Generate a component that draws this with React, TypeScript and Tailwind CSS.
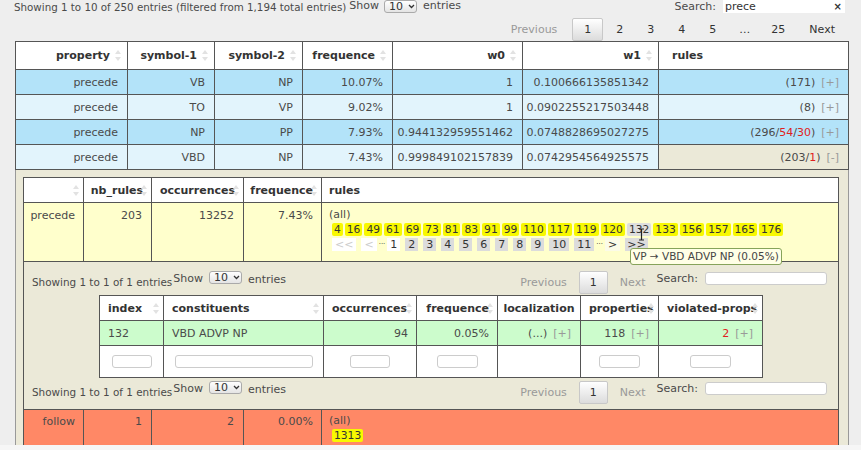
import React from "react";

const Sort = () => (
  <svg width="6" height="11" viewBox="0 0 6 11" className="shrink-0">
    <path d="M3 0 L6 4 H0 Z" fill="#e2e2e2" />
    <path d="M3 11 L6 7 H0 Z" fill="#e2e2e2" />
  </svg>
);

function Select() {
  return (
    <div className="flex items-center h-[13px] w-[33px] border border-[#aaa] rounded-[3px] bg-gradient-to-b from-white to-[#e4e4e4] pl-[4px] gap-[5px] text-[#333] leading-[11px]">
      <span>10</span>
      <svg width="7" height="5" viewBox="0 0 7 5">
        <path d="M1 1 L3.5 3.5 L6 1" stroke="#333" strokeWidth="1.3" fill="none" />
      </svg>
    </div>
  );
}

function Pager() {
  return (
    <div className="flex items-start">
      <span className="px-[10px] mt-[5px] text-[#999]">Previous</span>
      <span className="ml-[2px] px-[10px] h-[23px] flex items-center border border-[#c8c8c8] rounded-[2px] bg-gradient-to-b from-white to-[#dcdcdc] text-[#333]">1</span>
      <span className="ml-[2px] px-[10px] mt-[5px] text-[#999]">Next</span>
    </div>
  );
}

function NestedBar() {
  return (
    <div className="flex items-start h-[24px]">
      <span className="mt-[5px] text-[10.4px]">Showing 1 to 1 of 1 entries</span>
      <span className="ml-[1px] mt-[1px]">Show</span>
      <div className="ml-[6px]">
        <Select />
      </div>
      <span className="ml-[6px] mt-[2px]">entries</span>
      <div className="ml-auto mr-[3px] flex items-start">
        <Pager />
        <span className="ml-[1px] mt-[1px]">Search:</span>
        <div className="ml-[7px] mt-[1px] w-[122px] h-[13px] bg-white border border-[#ccc] rounded-[3px]" />
      </div>
    </div>
  );
}

const mainRows = [
  { bg: "bg-[#b3e3f9]", s1: "VB", s2: "NP", f: "10.07%", w0: "1", w1: "0.100666135851342", rules: <>(171)</>, open: false },
  { bg: "bg-[#e2f4fc]", s1: "TO", s2: "VP", f: "9.02%", w0: "1", w1: "0.0902255217503448", rules: <>(8)</>, open: false },
  { bg: "bg-[#b3e3f9]", s1: "NP", s2: "PP", f: "7.93%", w0: "0.944132959551462", w1: "0.0748828695027275", rules: <>(296/<span className="text-[#e02020]">54</span>/<span className="text-[#e02020]">30</span>)</>, open: false },
  { bg: "bg-[#e2f4fc]", s1: "VBD", s2: "NP", f: "7.43%", w0: "0.999849102157839", w1: "0.0742954564925575", rules: <>(203/<span className="text-[#e02020]">1</span>)</>, open: true },
];

const ruleIds = ["4", "16", "49", "61", "69", "73", "81", "83", "91", "99", "110", "117", "119", "120", "132", "133", "156", "157", "165", "176"];
const pages = ["2", "3", "4", "5", "6", "7", "8", "9", "10", "11"];

export default function App() {
  const td = "border border-[#555] h-[25px] p-0 pr-[9px] text-right";
  const th = "border border-[#555] p-0 font-bold text-[#333]";
  return (
    <div className="w-[861px] h-[450px] overflow-hidden bg-[#eeeeee] font-['DejaVu_Sans',sans-serif] text-[11px] leading-[13px] text-[#4a4a4a]">
      <div className="h-[445px] overflow-hidden">
        <div className="flex items-start h-[18px] pl-[14px] pr-[16px]">
          <span className="mt-[1px] text-[10.3px]">Showing 1 to 10 of 250 entries (filtered from 1,194 total entries)</span>
          <span className="ml-[3px] leading-[11px]">Show</span>
          <div className="ml-[5px]">
            <Select />
          </div>
          <span className="ml-[6px] leading-[12px]">entries</span>
          <div className="ml-auto flex items-start">
            <span>Search:</span>
            <div className="ml-[7px] w-[122px] h-[13px] bg-white flex items-center justify-between pl-[2px] pr-[3px] text-[#333]">
              <span>prece</span>
              <span className="text-[10px] font-bold">×</span>
            </div>
          </div>
        </div>
        <div className="flex justify-end items-start h-[23px] pr-[13px]">
          <span className="px-[13px] mt-[5px] text-[#999]">Previous</span>
          <span className="ml-[2px] px-[11px] h-[23px] flex items-center border border-[#c8c8c8] rounded-[2px] bg-gradient-to-b from-white to-[#dcdcdc] text-[#333]">1</span>
          {["2", "3", "4", "5"].map((p) => (
            <span key={p} className="ml-[2px] px-[11px] mt-[5px] text-[#333]">{p}</span>
          ))}
          <span className="ml-[2px] pl-[10px] pr-[8px] mt-[5px] text-[#333]">…</span>
          <span className="ml-[2px] px-[11px] mt-[5px] text-[#333]">25</span>
          <span className="ml-[2px] pl-[11px] pr-[13px] mt-[5px] text-[#333]">Next</span>
        </div>

        <table className="ml-[15px] w-[833px] table-fixed border-collapse">
          <colgroup>
            <col className="w-[112px]" />
            <col className="w-[87px]" />
            <col className="w-[88px]" />
            <col className="w-[90px]" />
            <col className="w-[130px]" />
            <col className="w-[136px]" />
            <col className="w-[190px]" />
          </colgroup>
          <thead>
            <tr className="bg-white h-[28px]">
              {["property", "symbol-1", "symbol-2", "frequence", "w0", "w1"].map((h) => (
                <th key={h} className={th}>
                  <div className="flex items-center justify-end gap-[5px] pr-[6px]">
                    <span>{h}</span>
                    <Sort />
                  </div>
                </th>
              ))}
              <th className={th + " text-left pl-[13px]"}>rules</th>
            </tr>
          </thead>
          <tbody>
            {mainRows.map((r, i) => (
              <tr key={i} className={r.bg}>
                <td className={td}>precede</td>
                <td className={td}>{r.s1}</td>
                <td className={td}>{r.s2}</td>
                <td className={td}>{r.f}</td>
                <td className={td}>{r.w0}</td>
                <td className={td}>{r.w1}</td>
                <td className={td + (r.open ? " bg-[#ebe9d8]" : "")}>
                  {r.rules}
                  <span className="ml-[6px] text-[#999]">{r.open ? "[-]" : "[+]"}</span>
                </td>
              </tr>
            ))}
            <tr>
              <td colSpan={7} className="border-l border-r border-[#999] bg-[#ebe9d8] pl-[7px] pt-[7px] pr-[9px] align-top">
                <table className="w-[815px] table-fixed border-collapse">
                  <colgroup>
                    <col className="w-[60px]" />
                    <col className="w-[68px]" />
                    <col className="w-[92px]" />
                    <col className="w-[78px]" />
                    <col className="w-[517px]" />
                  </colgroup>
                  <thead>
                    <tr className="bg-white h-[25px]">
                      <th className={th}>
                        <div className="flex justify-end pr-[4px]">
                          <Sort />
                        </div>
                      </th>
                      {["nb_rules", "occurrences", "frequence"].map((h) => (
                        <th key={h} className={th}>
                          <div className="flex items-center justify-end pr-[4px] overflow-hidden">
                            <span>{h}</span>
                            <span className="-ml-[2px]">
                              <Sort />
                            </span>
                          </div>
                        </th>
                      ))}
                      <th className={th + " text-left pl-[7px]"}>rules</th>
                    </tr>
                  </thead>
                  <tbody>
                    <tr className="bg-[#ffffcc] h-[59px]">
                      <td className="border border-[#555] align-top pt-[6px] pr-[8px] text-right">precede</td>
                      <td className="border border-[#555] align-top pt-[6px] pr-[9px] text-right">203</td>
                      <td className="border border-[#555] align-top pt-[6px] pr-[9px] text-right">13252</td>
                      <td className="border border-[#555] align-top pt-[6px] pr-[8px] text-right">7.43%</td>
                      <td className="border border-[#555] align-top pt-[5px] pl-[7px]">
                        <div className="relative">
                          <div>(all)</div>
                          <div className="flex gap-[2px] pl-[3px] mt-[2px] text-[#333] text-[10.7px]">
                            {ruleIds.map((id) => (
                              <span key={id} className={"px-[2px] rounded-[2px] " + (id === "132" ? "bg-[#dedede]" : "bg-[#f8f800]")}>
                                {id}
                              </span>
                            ))}
                          </div>
                          <div className="flex gap-[5px] pl-[3px] mt-[2px] text-[#333]">
                            <span className="px-[3px] bg-white text-[#ccc]">&lt;&lt;</span>
                            <span className="px-[3px] bg-white text-[#ccc]">&lt;</span>
                            <span className="-mx-[3px] text-[7px]">···</span>
                            <span className="px-[3px] bg-white">1</span>
                            {pages.map((p) => (
                              <span key={p} className="px-[3px] bg-[#dcdcdc]">{p}</span>
                            ))}
                            <span className="-mx-[3px] text-[7px]">···</span>
                            <span className="px-[3px] bg-[#fbfbe8]">&gt;</span>
                            <span className="px-[2px] bg-[#dcdcdc]">&gt;&gt;</span>
                          </div>
                          <svg width="7" height="13" viewBox="0 0 7 13" className="absolute left-[309px] top-[20px]">
                            <path d="M1 1 H6 M3.5 1 V12 M1 12 H6" stroke="#222" strokeWidth="1.2" fill="none" />
                          </svg>
                          <div className="absolute left-[301px] top-[40px] px-[2px] h-[17px] flex items-center bg-[#ffffe6] border border-[#86a35a] rounded-[3px] text-[#444] text-[10.5px] whitespace-nowrap">
                            VP → VBD ADVP NP (0.05%)
                          </div>
                        </div>
                      </td>
                    </tr>
                    <tr>
                      <td colSpan={5} className="border border-[#555] bg-[#ebe9d8] px-[8px] pt-[9px] pb-[4px]">
                        <NestedBar />
                        <table className="mx-auto w-[663px] table-fixed border-collapse">
                          <colgroup>
                            <col className="w-[64px]" />
                            <col className="w-[160px]" />
                            <col className="w-[93px]" />
                            <col className="w-[81px]" />
                            <col className="w-[83px]" />
                            <col className="w-[78px]" />
                            <col className="w-[104px]" />
                          </colgroup>
                          <thead>
                            <tr className="bg-white h-[25px]">
                              {[
                                ["index", true],
                                ["constituents", true],
                                ["occurrences", true],
                                ["frequence", true],
                                ["localization", false],
                                ["properties", true],
                                ["violated-props", true],
                              ].map(([h, s]) => (
                                <th key={h as string} className={th}>
                                  {h === "localization" ? (
                                    <div className="text-center">{h}</div>
                                  ) : h === "frequence" ? (
                                    <div className="flex items-center justify-end pr-[4px] overflow-hidden">
                                      <span>{h}</span>
                                      <span className="-ml-[2px]"><Sort /></span>
                                    </div>
                                  ) : (
                                    <div className="flex items-center justify-between pl-[8px] pr-[4px] overflow-hidden">
                                      <span>{h}</span>
                                      {s ? <span className="-ml-[6px]"><Sort /></span> : null}
                                    </div>
                                  )}
                                </th>
                              ))}
                            </tr>
                          </thead>
                          <tbody>
                            <tr className="bg-[#ccfccc] h-[25px]">
                              <td className="border border-[#555] pl-[8px]">132</td>
                              <td className="border border-[#555] pl-[8px]">VBD ADVP NP</td>
                              <td className="border border-[#555] pr-[8px] text-right">94</td>
                              <td className="border border-[#555] pr-[8px] text-right">0.05%</td>
                              <td className="border border-[#555] pr-[9px] text-right">
                                (...)<span className="ml-[6px] text-[#999]">[+]</span>
                              </td>
                              <td className="border border-[#555] pr-[9px] text-right">
                                118<span className="ml-[6px] text-[#999]">[+]</span>
                              </td>
                              <td className="border border-[#555] pr-[9px] text-right">
                                <span className="text-[#e02020]">2</span>
                                <span className="ml-[6px] text-[#999]">[+]</span>
                              </td>
                            </tr>
                            <tr className="bg-white h-[32px]">
                              {[40, 138, 40, 41, 0, 41, 41].map((w, i) => (
                                <td key={i} className="border border-[#555] text-center">
                                  {w ? (
                                    <div
                                      className={
                                        "mx-auto h-[13px] border border-[#ccc] rounded-[3px] bg-white " +
                                        (w === 138 ? "w-[138px]" : w === 41 ? "w-[41px]" : "w-[40px]")
                                      }
                                    />
                                  ) : null}
                                </td>
                              ))}
                            </tr>
                          </tbody>
                        </table>
                        <div className="mt-[3px]">
                          <NestedBar />
                        </div>
                      </td>
                    </tr>
                    <tr className="bg-[#ff8866] h-[40px]">
                      <td className="border border-[#555] align-top pt-[5px] pr-[8px] text-right">follow</td>
                      <td className="border border-[#555] align-top pt-[5px] pr-[9px] text-right">1</td>
                      <td className="border border-[#555] align-top pt-[5px] pr-[9px] text-right">2</td>
                      <td className="border border-[#555] align-top pt-[5px] pr-[8px] text-right">0.00%</td>
                      <td className="border border-[#555] align-top pt-[4px] pl-[7px]">
                        <div>(all)</div>
                        <div className="flex pl-[3px] mt-[2px] text-[#333] text-[10.7px]">
                          <span className="px-[2px] rounded-[2px] bg-[#f8f800]">1313</span>
                        </div>
                      </td>
                    </tr>
                  </tbody>
                </table>
              </td>
            </tr>
          </tbody>
        </table>
      </div>
      <div className="h-[5px] bg-[#f6f6f6]" />
    </div>
  );
}
